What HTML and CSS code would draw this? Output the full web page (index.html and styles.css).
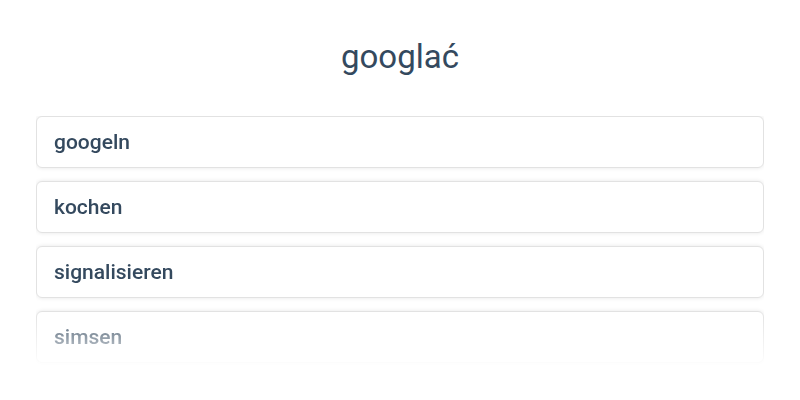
FILE: index.html
```html
<!DOCTYPE html>
<html>
<head>
<meta charset="utf-8">
<link rel="stylesheet" href="styles.css">
</head>
<body>
<div class="page">
  <h1 class="title">googlać</h1>
  <div class="list">
    <div class="card">googeln</div>
    <div class="card">kochen</div>
    <div class="card">signalisieren</div>
    <div class="card">simsen</div>
  </div>
</div>
</body>
</html>
```
FILE: styles.css
```css
html, body {
  margin: 0;
  padding: 0;
  background: #ffffff;
  height: 400px;
  overflow: hidden;
}
.page {
  font-family: Roboto, "Noto Sans", sans-serif;
  color: #34495e;
  padding: 35px 36px 0;
}
.title {
  margin: 0;
  text-align: center;
  font-size: 33px;
  font-weight: 400;
  line-height: 44px;
  color: #34495e;
}
.list {
  margin-top: 37px;
  display: flex;
  flex-direction: column;
  gap: 13px;
  height: 247px;
  padding-bottom: 4px;
  -webkit-mask-image: linear-gradient(to bottom, #000 0, #000 195px, rgba(0,0,0,0.1) 247px);
  mask-image: linear-gradient(to bottom, #000 0, #000 195px, rgba(0,0,0,0.1) 247px);
}
.card {
  flex: none;
  box-sizing: border-box;
  height: 52px;
  border: 1px solid #e2e2e2;
  border-radius: 6px;
  box-shadow: 0 0 4px rgba(0,0,0,0.1);
  padding: 0 17px;
  display: flex;
  align-items: center;
  font-size: 21px;
  font-weight: 500;
  color: #34495e;
  background: #fff;
}
```
